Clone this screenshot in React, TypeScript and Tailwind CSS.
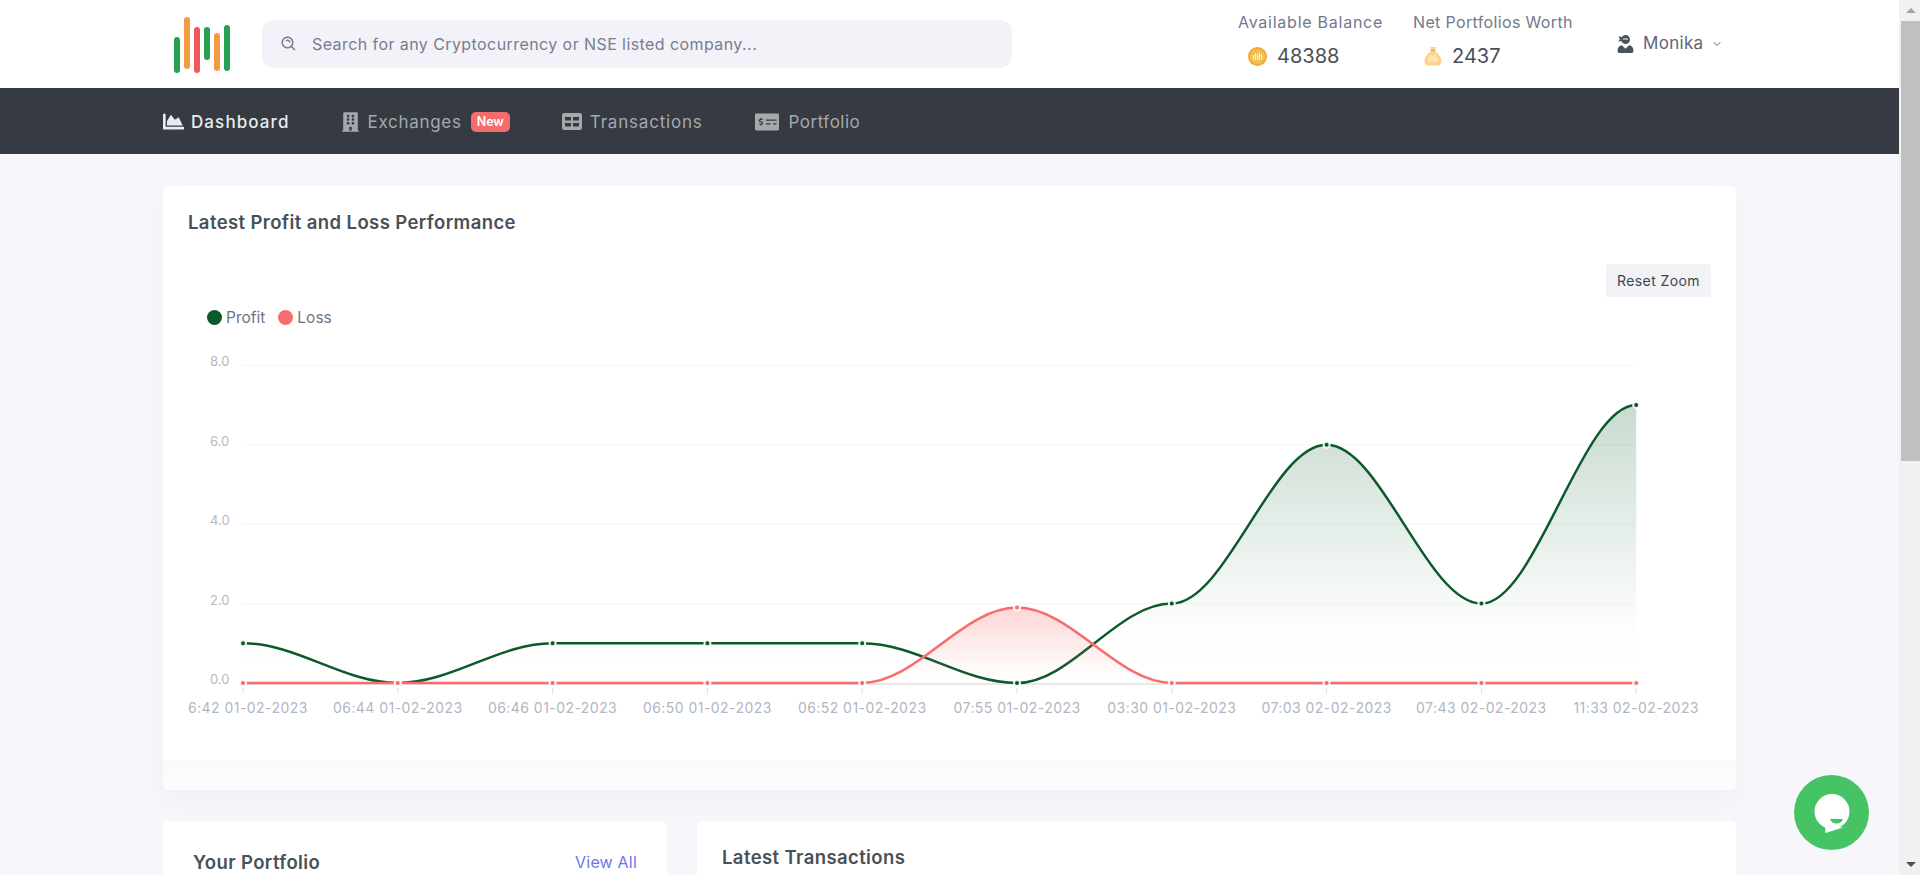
import React from 'react';
import { ChevronDown } from 'lucide-react';
import { BiSearchAlt } from 'react-icons/bi';
import { FaBuilding, FaChartArea, FaMoneyCheckAlt, FaUserNinja } from 'react-icons/fa';

function TableIcon({ className }: { className?: string }) {
  return (
    <svg viewBox="0 0 20 17" className={className} fill="currentColor">
      <path
        fillRule="evenodd"
        d="M2 0h16a2 2 0 0 1 2 2v13a2 2 0 0 1-2 2H2a2 2 0 0 1-2-2V2a2 2 0 0 1 2-2zM3 4v3.500h6V4zM11 4v3.500h6V4zM3 10v3.500h6V10zM11 10v3.500h6V10z"
      />
    </svg>
  );
}

const navItems = [
  { label: 'Dashboard', icon: FaChartArea, iconSize: 'h-[21px] w-[21px]', text: 'gap-[7px] tracking-[1.1px]', active: true },
  { label: 'Exchanges', icon: FaBuilding, iconSize: 'h-[20px] w-[17px]', text: 'gap-[9px] tracking-[0.7px]', badge: 'New' },
  { label: 'Transactions', icon: TableIcon, iconSize: 'h-[17px] w-[20px]', text: 'gap-[8px] tracking-[0.8px]' },
  { label: 'Portfolio', icon: FaMoneyCheckAlt, iconSize: 'h-[24px] w-[24px]', text: 'gap-[10px] tracking-[0.5px]' },
];

const logoBars = [
  { h: 'h-[36px]', mt: 'mt-[20px]', c: 'bg-[#27a052]' },
  { h: 'h-[52px]', mt: 'mt-0', c: 'bg-[#f39c3f]' },
  { h: 'h-[46px]', mt: 'mt-[10px]', c: 'bg-[#f05a5a]' },
  { h: 'h-[33px]', mt: 'mt-[10px]', c: 'bg-[#27a052]' },
  { h: 'h-[38px]', mt: 'mt-[16px]', c: 'bg-[#f39c3f]' },
  { h: 'h-[46px]', mt: 'mt-[8px]', c: 'bg-[#27a052]' },
];

const labels = [
  '6:42 01-02-2023',
  '06:44 01-02-2023',
  '06:46 01-02-2023',
  '06:50 01-02-2023',
  '06:52 01-02-2023',
  '07:55 01-02-2023',
  '03:30 01-02-2023',
  '07:03 02-02-2023',
  '07:43 02-02-2023',
  '11:33 02-02-2023',
];

const profit = [1, 0, 1, 1, 1, 0, 2, 6, 2, 7];
const loss = [0, 0, 0, 0, 0, 1.9, 0, 0, 0, 0];

// chart svg starts at page x=163, y=340
const X0 = 80;
const STEP = 154.8;
const BASE = 343;
const UNIT = 39.7;
const px = (i: number) => X0 + i * STEP;
const py = (v: number) => BASE - v * UNIT;

function curve(data: number[]) {
  let d = `M${px(0)} ${py(data[0])}`;
  for (let i = 1; i < data.length; i++) {
    const c = STEP * 0.35;
    d += ` C${px(i - 1) + c} ${py(data[i - 1])} ${px(i) - c} ${py(data[i])} ${px(i)} ${py(data[i])}`;
  }
  return d;
}

function Series({ data, color, grad }: { data: number[]; color: string; grad: string }) {
  const line = curve(data);
  return (
    <g>
      <path d={`${line} L${px(9)} ${BASE} L${px(0)} ${BASE} Z`} fill={`url(#${grad})`} />
      <path d={line} fill="none" stroke={color} strokeWidth={2.5} />
    </g>
  );
}

function Markers({ data, color }: { data: number[]; color: string }) {
  return (
    <g>
      {data.map((v, i) => (
        <circle key={i} cx={px(i)} cy={py(v)} r={3} fill={color} stroke="#fff" strokeOpacity={0.9} strokeWidth={2} />
      ))}
    </g>
  );
}

function PerformanceChart() {
  return (
    <svg width="1573" height="420" className="block">
      <defs>
        <linearGradient id="profitFill" x1="0" y1="0" x2="0" y2="1">
          <stop offset="0%" stopColor="#0b5a2c" stopOpacity={0.22} />
          <stop offset="82%" stopColor="#0b5a2c" stopOpacity={0.005} />
          <stop offset="100%" stopColor="#0b5a2c" stopOpacity={0} />
        </linearGradient>
        <linearGradient id="lossFill" x1="0" y1="0" x2="0" y2="1">
          <stop offset="0%" stopColor="#f76c6c" stopOpacity={0.28} />
          <stop offset="90%" stopColor="#f76c6c" stopOpacity={0.01} />
          <stop offset="100%" stopColor="#f76c6c" stopOpacity={0} />
        </linearGradient>
      </defs>
      {[0, 2, 4, 6, 8].map((v) => (
        <g key={v}>
          {v > 0 && <line x1={80} x2={px(9)} y1={py(v)} y2={py(v)} stroke="#f5f5f5" />}
          <text x={47} y={py(v) + 1} fontSize="13" fill="#b3b9c6">
            {v.toFixed(1)}
          </text>
        </g>
      ))}
      <line x1={80} x2={px(9)} y1={BASE + 1} y2={BASE + 1} stroke="#e0e0e0" strokeWidth={1.5} />
      {labels.map((label, i) => (
        <g key={label}>
          <line x1={px(i)} x2={px(i)} y1={BASE + 5} y2={BASE + 11} stroke="#e0e0e0" />
          <text
            x={i === 0 ? 25 : px(i)}
            y={BASE + 30}
            fontSize="14"
            letterSpacing="0.45"
            fill="#b0b6c3"
            textAnchor={i === 0 ? 'start' : 'middle'}
          >
            {label}
          </text>
        </g>
      ))}
      <Series data={profit} color="#0b5a2c" grad="profitFill" />
      <Series data={loss} color="#f76c6c" grad="lossFill" />
      <Markers data={profit} color="#0b5a2c" />
      <Markers data={loss} color="#f76c6c" />
    </svg>
  );
}

function CoinIcon() {
  return (
    <svg width="19" height="19" viewBox="0 0 19 19">
      <circle cx="9.5" cy="9.5" r="9.5" fill="#f4a93c" />
      <circle cx="9.5" cy="9.5" r="7.5" fill="#f2bf4e" />
      <path d="M5.5 8v5M7.5 6v7M9.5 7v6M11.5 5.500v7.500M13.500 7.500v5" stroke="#fdeec4" strokeWidth="1.2" />
    </svg>
  );
}

function BagIcon() {
  return (
    <svg width="20" height="20" viewBox="0 0 20 20">
      <path d="M7 1h6l-1.500 4c3 2 7 6 7 10 0 3-2 4.500-4 4.500H5.500c-2 0-4-1.500-4-4.500 0-4 4-8 7-10z" fill="#fbd38a" />
      <path d="M7.500 4.300h5" stroke="#d98f5a" strokeWidth="1" />
      <path d="M6 11v5M8 9v7M10 10v6M12 8.500v7.500M14 11v5" stroke="#fff3d6" strokeWidth="1.100" />
    </svg>
  );
}

function Header() {
  return (
    <header className="h-[88px] bg-white">
      <div className="mx-auto flex h-full w-[1573px]">
        <div className="ml-[11px] mt-[17px] flex h-[56px] w-[56px] gap-1">
          {logoBars.map((bar, i) => (
            <span key={i} className={`w-[6px] rounded-full ${bar.h} ${bar.mt} ${bar.c}`} />
          ))}
        </div>
        <div className="ml-[32px] mt-[20px] flex h-[48px] w-[750px] items-center rounded-[12px] bg-[#f2f2f8] pl-[18px] text-[16px] tracking-[0.42px] text-[#7a7b91]">
          <BiSearchAlt className="h-[18px] w-[18px]" />
          <span className="ml-[14px]">Search for any Cryptocurrency or NSE listed company...</span>
        </div>
        <div className="ml-[226px] mt-[12px] w-[145px] text-[#74788d]">
          <div className="whitespace-nowrap text-[16px] leading-5 tracking-[0.75px]">Available Balance</div>
          <div className="ml-[10px] mt-[12px] flex items-center gap-[10px] text-[20px] leading-6 text-[#495057]">
            <CoinIcon />
            48388
          </div>
        </div>
        <div className="ml-[30px] mt-[12px] w-[160px] text-[#74788d]">
          <div className="whitespace-nowrap text-[16px] leading-5 tracking-[0.35px]">Net Portfolios Worth</div>
          <div className="ml-[10px] mt-[12px] flex items-center gap-[9px] text-[20px] leading-6 text-[#495057]">
            <BagIcon />
            2437
          </div>
        </div>
        <div className="ml-[44px] mt-[33px] flex h-[22px] items-center text-[17px] tracking-[0.3px] text-[#5f6477]">
          <FaUserNinja className="h-[18px] w-[17px] text-[#495062]" />
          <span className="ml-[9px]">Monika</span>
          <ChevronDown className="ml-[8px] h-[12px] w-[12px]" />
        </div>
      </div>
    </header>
  );
}

function Nav() {
  return (
    <nav className="h-[66px] bg-[#363a42]">
      <div className="mx-auto flex h-full w-[1573px] items-center gap-[52px] pt-[4px]">
        {navItems.map((item) => (
          <div
            key={item.label}
            className={`flex items-center text-[17px] ${item.text} ${item.active ? 'font-medium text-[#e9ecef]' : 'text-[#a6a8ab]'}`}
          >
            <item.icon className={`-mt-[3px] ${item.iconSize}`} />
            <span>{item.label}</span>
            {item.badge && (
              <span className="-mt-[2px] rounded-[5px] bg-[#f56c6c] px-[6px] text-[12.5px] leading-5 font-semibold tracking-normal text-white">
                {item.badge}
              </span>
            )}
          </div>
        ))}
      </div>
    </nav>
  );
}

function ChartCard() {
  return (
    <section className="rounded-[5px] bg-white shadow-[0_12px_24px_rgba(18,38,63,0.03)]">
      <h2 className="pl-[25px] pt-[24px] text-[18.5px] leading-6 font-semibold tracking-[0.4px] text-[#495057]">
        Latest Profit and Loss Performance
      </h2>
      <div className="mt-[30px] flex justify-end pr-[25px]">
        <button className="h-[33px] w-[105px] rounded-[3px] bg-[#f1f3f7] text-[14px] tracking-[0.4px] text-[#3f4450]">Reset Zoom</button>
      </div>
      <div className="ml-[44px] mb-[6px] mt-[4px] flex h-[33px] items-center text-[15.5px] text-[#6e7486]">
        <span className="h-[15px] w-[15px] rounded-full bg-[#0b5a2c]" />
        <span className="ml-[4px]">Profit</span>
        <span className="ml-[13px] h-[15px] w-[15px] rounded-full bg-[#f76c6c]" />
        <span className="ml-[4px]">Loss</span>
      </div>
      <PerformanceChart />
      <div className="h-[30px] rounded-b-[5px] bg-gradient-to-b from-[#f9f9f9] to-[#fdfdfd]" />
    </section>
  );
}

function Scrollbar() {
  return (
    <aside className="flex h-full w-[21px] shrink-0 flex-col items-end bg-[#f1f1f1]">
      <div className="flex h-[21px] w-full items-center justify-center pl-[2px]">
        <span className="h-0 w-0 border-x-[5px] border-b-[5px] border-x-transparent border-b-[#a3a3a3]" />
      </div>
      <div className="h-[440px] w-[19px] bg-[#c0c0c0]" />
      <div className="flex-1" />
      <div className="flex h-[21px] w-full items-center justify-center pl-[2px]">
        <span className="h-0 w-0 border-x-[5px] border-t-[5px] border-x-transparent border-t-[#505050]" />
      </div>
    </aside>
  );
}

function ChatButton() {
  return (
    <button className="fixed left-[1794px] top-[775px] flex h-[75px] w-[75px] items-center justify-center rounded-full bg-[#45c365]">
      <svg width="36" height="40" viewBox="0 0 36 40" className="mt-[3px]">
        <circle cx="18" cy="17.5" r="17.5" fill="#fff" />
        <path d="M11 32l.5 7L29 33.500z" fill="#fff" />
        <path d="M16 25h13c-1 3-3.500 4.500-6.500 4.500S17 28 16 25z" fill="#45c365" />
      </svg>
    </button>
  );
}

export default function App() {
  return (
    <div className="flex h-screen overflow-hidden bg-[#f7f7fb] font-['Inter',sans-serif]">
      <main className="min-w-0 flex-1 overflow-hidden">
        <Header />
        <Nav />
        <div className="mx-auto w-[1573px] pt-[32px]">
          <ChartCard />
          <div className="mt-[31px] flex gap-[30px]">
            <section className="h-[200px] w-[504px] rounded-[5px] bg-white px-[30px] pt-[29px]">
              <div className="flex items-center justify-between">
                <h2 className="text-[18.5px] leading-6 font-semibold tracking-[0.4px] text-[#495057]">Your Portfolio</h2>
                <a className="text-[16px] tracking-[0.2px] text-[#6f74f0]">View All</a>
              </div>
            </section>
            <section className="h-[200px] flex-1 rounded-[5px] bg-white pl-[25px] pt-[24px]">
              <h2 className="text-[18.5px] leading-6 font-semibold tracking-[0.4px] text-[#495057]">Latest Transactions</h2>
            </section>
          </div>
        </div>
      </main>
      <Scrollbar />
      <ChatButton />
    </div>
  );
}
